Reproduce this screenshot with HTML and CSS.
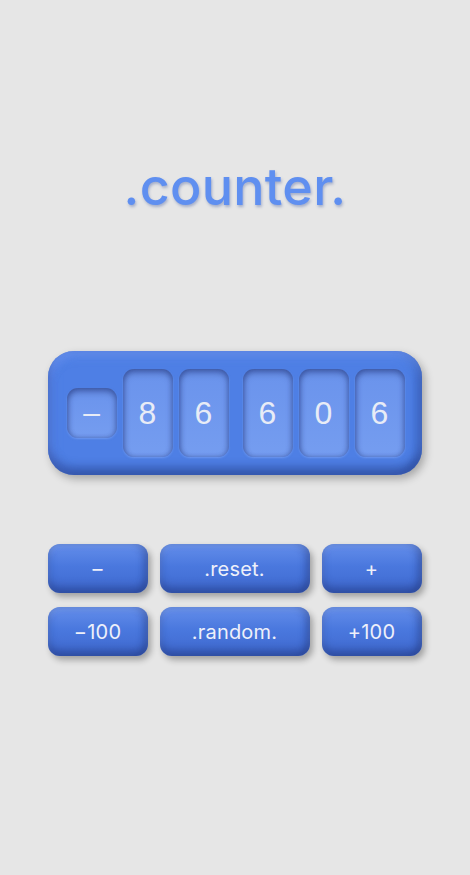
FILE: index.html
```html
<!DOCTYPE html>
<html>
<head>
<meta charset="utf-8">
<link rel="stylesheet" href="styles.css">
</head>
<body>
<main class="page">
  <h1 class="title">.counter.</h1>
  <section class="counter">
    <div class="sign">–</div>
    <div class="group">
      <div class="cell">8</div>
      <div class="cell">6</div>
    </div>
    <div class="group">
      <div class="cell">6</div>
      <div class="cell">0</div>
      <div class="cell">6</div>
    </div>
  </section>
  <section class="controls">
    <button class="btn small">–</button>
    <button class="btn wide">.reset.</button>
    <button class="btn small">+</button>
    <button class="btn small">−100</button>
    <button class="btn wide">.random.</button>
    <button class="btn small">+100</button>
  </section>
</main>
</body>
</html>
```

FILE: styles.css
```css
html, body {
  margin: 0;
  padding: 0;
  background: #e6e6e6;
}
.page {
  width: 470px;
  height: 875px;
  display: flex;
  flex-direction: column;
  align-items: center;
  font-family: Inter, "Noto Sans", sans-serif;
}
.title {
  margin: 156px 0 0 0;
  height: 62px;
  line-height: 62px;
  font-size: 52px;
  font-weight: 500;
  letter-spacing: 0.3px;
  color: #5f8ff0;
  text-shadow: 1px 2px 3px rgba(40, 70, 150, 0.35);
}
.counter {
  margin-top: 133px;
  margin-left: -1px;
  width: 338px;
  height: 124px;
  padding: 0 17px 0 19px;
  box-sizing: content-box;
  display: flex;
  align-items: center;
  border-radius: 26px;
  background: #4e7fe5;
  box-shadow: inset 0 -8px 10px rgba(30, 50, 120, 0.45), inset 0 6px 8px rgba(120, 160, 245, 0.5), inset 6px 0 8px rgba(90, 130, 235, 0.4), inset -6px 0 8px rgba(30, 60, 140, 0.35), 3px 4px 8px rgba(0, 0, 0, 0.28);
}
.sign, .cell {
  display: flex;
  align-items: center;
  justify-content: center;
  background: linear-gradient(180deg, #6a93ec 0%, #759df0 100%);
  color: #e8ecf6;
  font-family: "Liberation Sans", Arial, sans-serif;
  font-size: 32px;
  box-shadow: inset 0 4px 6px rgba(40, 60, 130, 0.55), inset 2px 0 4px rgba(40, 60, 130, 0.3), inset -2px 0 4px rgba(40, 60, 130, 0.2), 0 1px 2px rgba(140, 175, 250, 0.5);
}
.sign {
  width: 50px;
  height: 50px;
  border-radius: 11px;
  margin-right: 6px;
  font-size: 30px;
}
.cell {
  width: 50px;
  height: 88px;
  border-radius: 11px;
}
.group {
  display: flex;
  gap: 6px;
}
.group + .group {
  margin-left: 14px;
}
.controls {
  margin-top: 69px;
  display: grid;
  grid-template-columns: 100px 150px 100px;
  grid-auto-rows: 49px;
  column-gap: 12px;
  row-gap: 14px;
  margin-left: -1px;
}
.btn {
  border: none;
  margin: 0;
  padding: 0;
  border-radius: 12px;
  color: #eef0fa;
  font-family: Inter, "Noto Sans", sans-serif;
  font-size: 20px;
  font-weight: 400;
  letter-spacing: 0.2px;
  background: linear-gradient(180deg, #648eeb 0%, #4a78de 45%, #3f69cf 100%);
  box-shadow: inset 0 -6px 8px rgba(30, 50, 120, 0.45), inset -5px 0 7px rgba(30, 50, 120, 0.3), inset 0 3px 5px rgba(140, 175, 245, 0.5), 3px 4px 6px rgba(0, 0, 0, 0.3);
}
.btn.wide {
  width: 150px;
}
```
